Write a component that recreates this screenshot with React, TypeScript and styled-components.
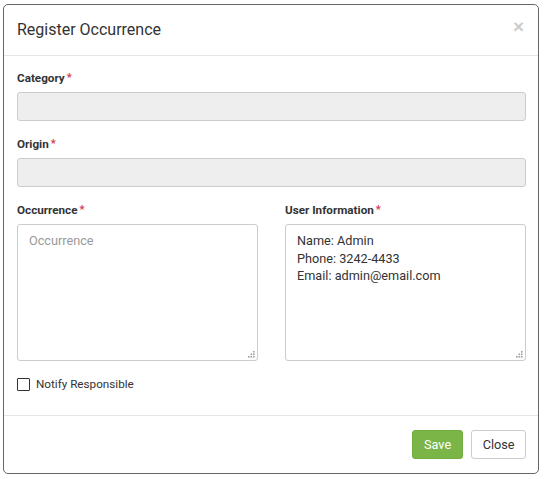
import React from "react";
import styled, { createGlobalStyle } from "styled-components";

const Global = createGlobalStyle`
  html, body { margin: 0; padding: 0; background: #fff; }
  body { font-family: Roboto, "Liberation Sans", Arial, sans-serif; color: #333; }
  * { box-sizing: border-box; }
`;

const Page = styled.div`
  padding: 4px 0 0 3px;
`;

const Modal = styled.div`
  width: 536px;
  background: #fff;
  border: 1px solid #666;
  border-radius: 5px;
  display: flex;
  flex-direction: column;
`;

const Header = styled.div`
  display: flex;
  align-items: center;
  justify-content: space-between;
  padding: 15px 14px 15px 13px;
  border-bottom: 1px solid #e5e5e5;
`;

const Title = styled.h4`
  margin: 0;
  font-size: 16px;
  line-height: 20px;
  font-weight: 400;
  color: #333;
`;

const CloseX = styled.button`
  border: 0;
  background: transparent;
  padding: 0;
  font-family: "Liberation Sans", Arial, sans-serif;
  font-size: 19px;
  line-height: 20px;
  font-weight: 700;
  color: #000;
  opacity: 0.2;
  margin-top: -6px;
  cursor: pointer;
`;

const Body = styled.div`
  padding: 14px 12px 24px 13px;
`;

const Group = styled.div`
  margin-bottom: 15px;
`;

const Label = styled.label`
  display: block;
  font-size: 11.7px;
  line-height: 17px;
  font-weight: 700;
  color: #333;
  margin-bottom: 5px;
`;

const Req = styled.span`
  color: #d8344f;
  margin-left: 2px;
  font-size: 11px;
  position: relative;
  top: -1px;
`;

const Field = styled.input`
  display: block;
  width: 100%;
  height: 29px;
  background: #eee;
  border: 1px solid #ccc;
  border-radius: 3px;
  padding: 6px 12px;
  font-family: inherit;
  font-size: 13px;
  outline: none;
`;

const Columns = styled.div`
  display: grid;
  grid-template-columns: 1fr 1fr;
  column-gap: 27px;
`;

const AreaWrap = styled.div`
  position: relative;
`;

const Area = styled.textarea`
  display: block;
  width: 100%;
  height: 137px;
  border: 1px solid #ccc;
  border-radius: 3px;
  padding: 7px 11px;
  font-family: inherit;
  font-size: 12.7px;
  line-height: 17.5px;
  color: #333;
  resize: none;
  outline: none;
  background: #fff;
  &::placeholder { color: #999; }
`;

const Grip = styled.svg`
  position: absolute;
  right: 3px;
  bottom: 3px;
  width: 7px;
  height: 7px;
  pointer-events: none;
`;

function ResizeGrip() {
  const dots = [
    [5, 0],
    [2.5, 2.5],
    [5, 2.5],
    [0, 5],
    [2.5, 5],
    [5, 5],
  ];
  return (
    <Grip viewBox="0 0 7 7">
      {dots.map(([x, y], i) => (
        <rect key={i} x={x} y={y} width="1.6" height="1.6" fill="#a0a0a0" />
      ))}
    </Grip>
  );
}

const CheckRow = styled.label`
  display: flex;
  align-items: center;
  gap: 6px;
  margin-top: 17px;
  font-size: 11.7px;
  line-height: 13px;
  color: #333;
`;

const Box = styled.span`
  width: 13px;
  height: 13px;
  border: 1px solid #333;
  border-radius: 1px;
  background: #fff;
  flex: none;
`;

const Footer = styled.div`
  display: flex;
  justify-content: flex-end;
  gap: 8px;
  padding: 14px 12px 14px 13px;
  border-top: 1px solid #e5e5e5;
`;

const Btn = styled.button<{ $primary?: boolean }>`
  height: 29px;
  padding: 0 ${(p) => (p.$primary ? "11px" : "10.5px")};
  border-radius: 3px;
  font-family: inherit;
  font-size: 12.7px;
  cursor: pointer;
  border: 1px solid ${(p) => (p.$primary ? "#72ad3f" : "#ccc")};
  background: ${(p) => (p.$primary ? "#7bb548" : "#fff")};
  color: ${(p) => (p.$primary ? "#fff" : "#333")};
`;

export default function App() {
  return (
    <>
      <Global />
      <Page>
        <Modal>
          <Header>
            <Title>Register Occurrence</Title>
            <CloseX aria-label="Close">×</CloseX>
          </Header>
          <Body>
            <Group>
              <Label>
                Category<Req>*</Req>
              </Label>
              <Field readOnly />
            </Group>
            <Group>
              <Label>
                Origin<Req>*</Req>
              </Label>
              <Field readOnly />
            </Group>
            <Columns>
              <div>
                <Label>
                  Occurrence<Req>*</Req>
                </Label>
                <AreaWrap>
                  <Area placeholder="Occurrence" />
                  <ResizeGrip />
                </AreaWrap>
              </div>
              <div>
                <Label>
                  User Information<Req>*</Req>
                </Label>
                <AreaWrap>
                  <Area
                    defaultValue={"Name: Admin\nPhone: 3242-4433\nEmail: admin@email.com"}
                  />
                  <ResizeGrip />
                </AreaWrap>
              </div>
            </Columns>
            <CheckRow>
              <Box />
              Notify Responsible
            </CheckRow>
          </Body>
          <Footer>
            <Btn $primary>Save</Btn>
            <Btn>Close</Btn>
          </Footer>
        </Modal>
      </Page>
    </>
  );
}
